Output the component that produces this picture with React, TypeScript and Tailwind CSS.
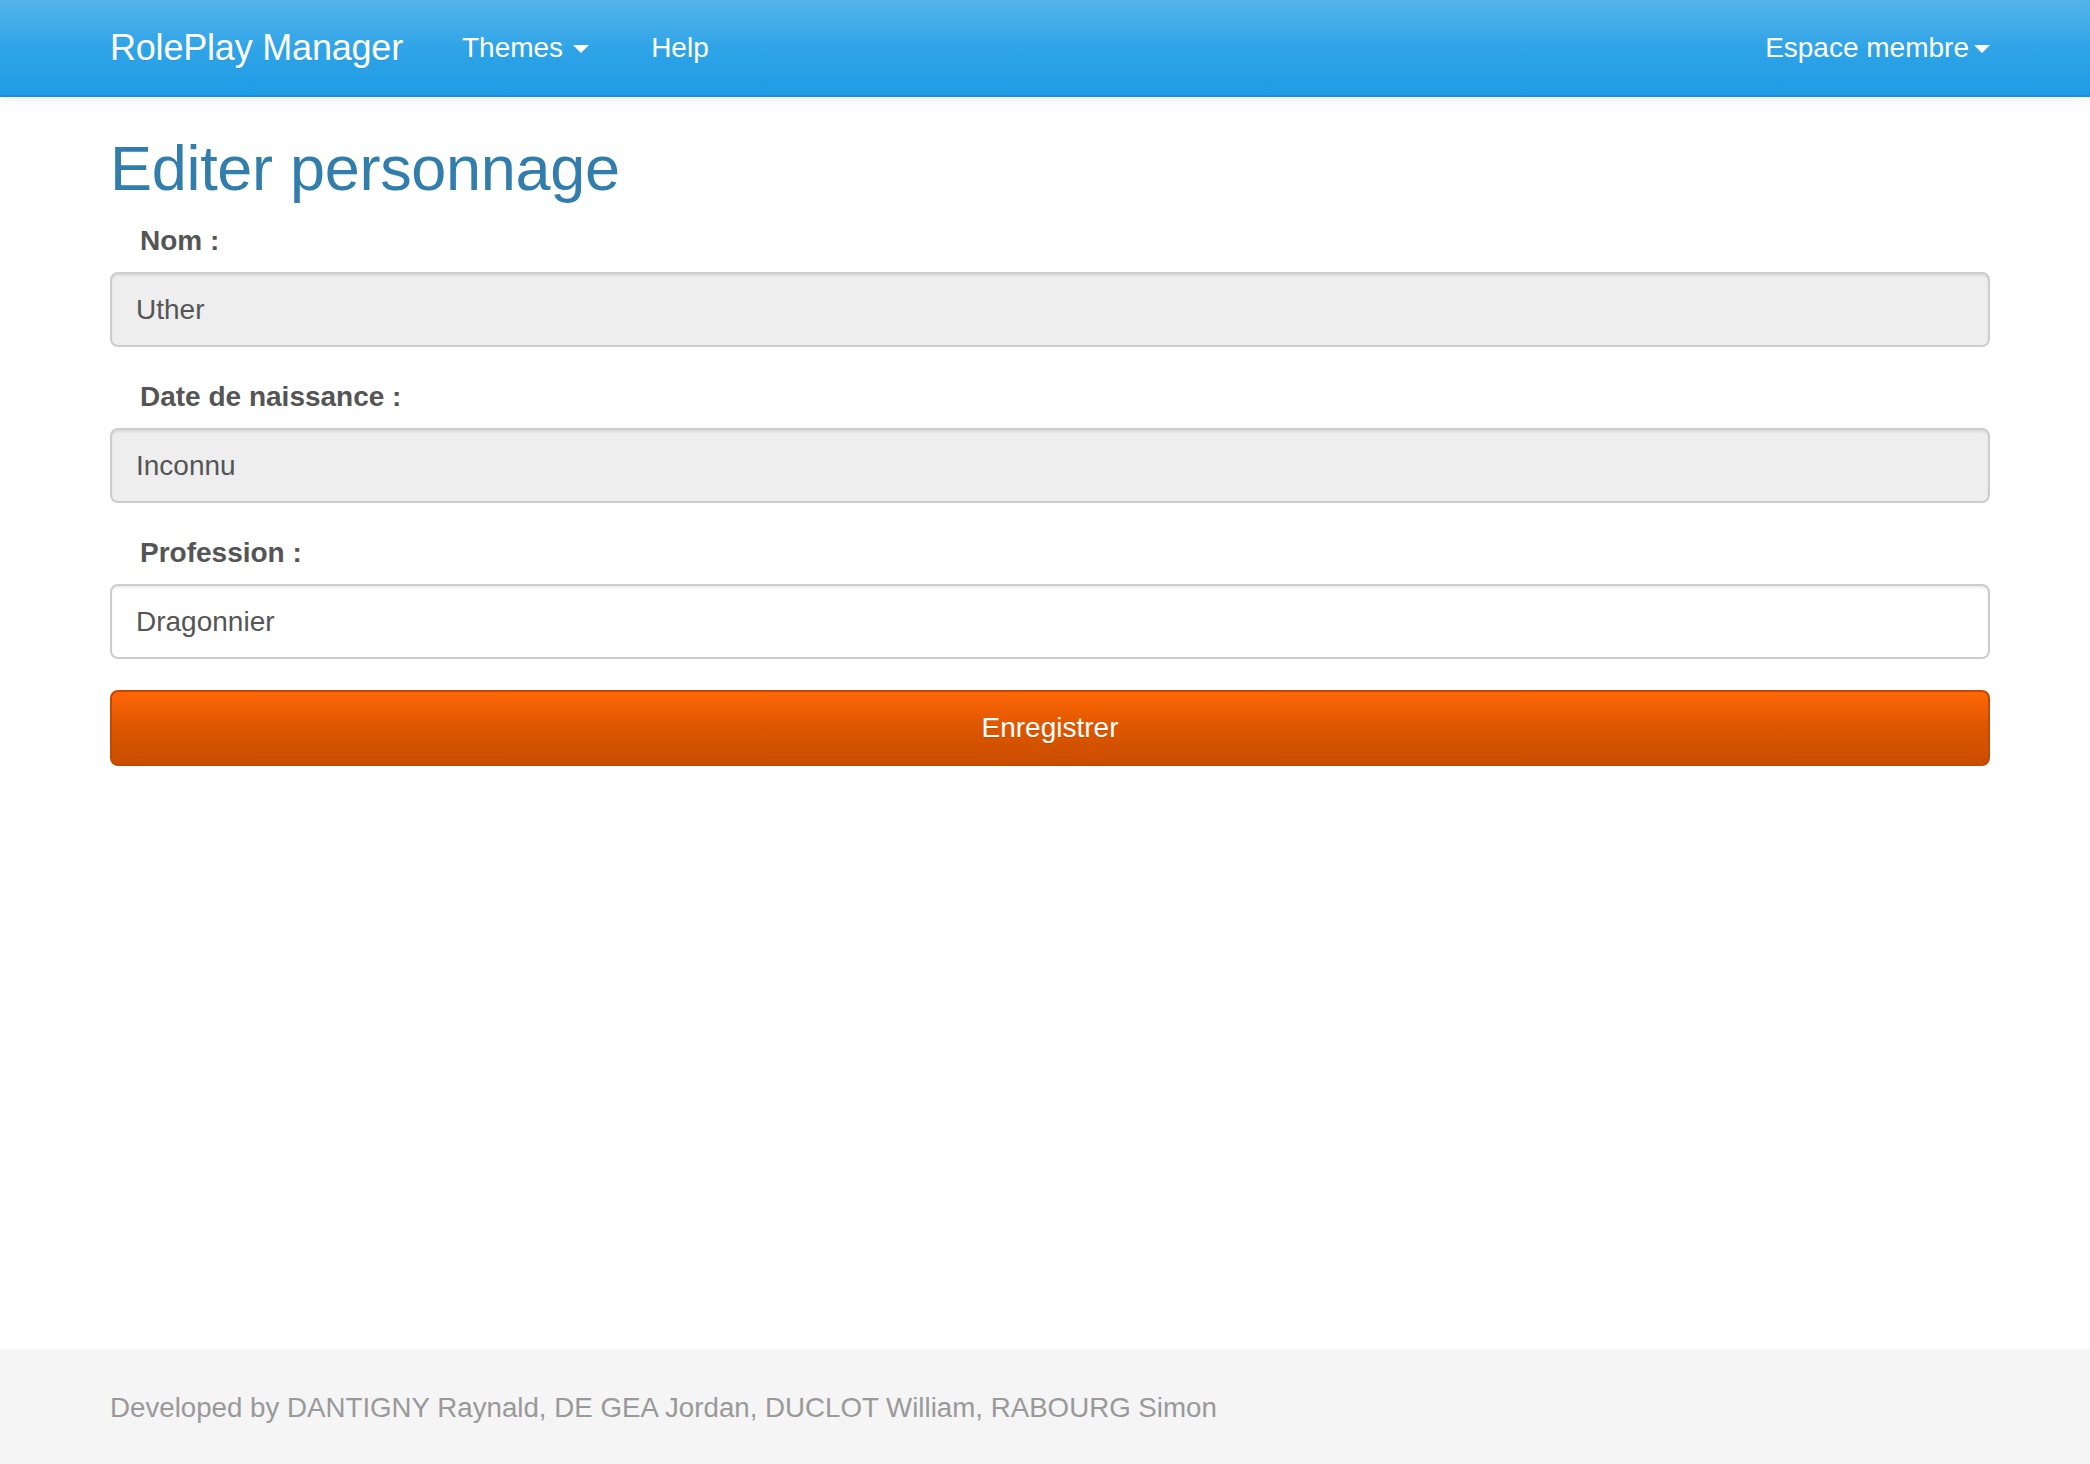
type Field = {
  id: string
  label: string
  value: string
  readOnly?: boolean
}

const FIELDS: Field[] = [
  { id: 'nom', label: 'Nom :', value: 'Uther', readOnly: true },
  { id: 'naissance', label: 'Date de naissance :', value: 'Inconnu', readOnly: true },
  { id: 'profession', label: 'Profession :', value: 'Dragonnier' },
]

function Caret({ gap }: { gap: string }) {
  return (
    <svg width="16" height="8" viewBox="0 0 16 8" className={gap}>
      <polygon points="0,0 16,0 8,8" fill="#ffffff" />
    </svg>
  )
}

function NavBar() {
  return (
    <header className="h-[97px] shrink-0 bg-gradient-to-b from-[#54b4eb] via-[#2fa4e7] to-[#1d9ce5] border-b-2 border-[#1990d5] shadow-[0_3px_10px_rgba(0,0,0,0.07)] relative z-10">
      <div className="h-full flex items-center pl-[110px] pr-[100px] text-white [text-shadow:0_1px_0_rgba(0,0,0,0.08)]">
        <a className="text-[36px] leading-none tracking-[-0.2px] mr-[59px]">RolePlay Manager</a>
        <nav className="flex items-center text-[28px] leading-none">
          <button type="button" className="flex items-center">
            Themes
            <Caret gap="ml-[10px] mt-[2px]" />
          </button>
          <button type="button" className="ml-[62px]">Help</button>
        </nav>
        <button type="button" className="ml-auto flex items-center text-[28px] leading-none">
          Espace membre
          <Caret gap="ml-[5px] mt-[2px]" />
        </button>
      </div>
    </header>
  )
}

function FormRow({ field }: { field: Field }) {
  return (
    <div className="flex flex-col">
      <label htmlFor={field.id} className="pl-[30px] text-[28px] leading-[40px] font-bold text-[#555555]">
        {field.label}
      </label>
      <input
        id={field.id}
        defaultValue={field.value}
        readOnly={field.readOnly}
        className={
          field.readOnly
            ? 'mt-[11px] h-[75px] w-full rounded-[8px] border-2 border-[#cccccc] bg-[#eeeeee] px-[24px] text-[28px] text-[#555555] shadow-[inset_0_2px_2px_rgba(0,0,0,0.075)] outline-none'
            : 'mt-[11px] h-[75px] w-full rounded-[8px] border-2 border-[#cccccc] bg-white px-[24px] text-[28px] text-[#555555] shadow-[inset_0_2px_2px_rgba(0,0,0,0.075)] outline-none'
        }
      />
    </div>
  )
}

export default function App() {
  return (
    <div className="min-h-screen flex flex-col bg-white font-['Liberation_Sans',Arial,sans-serif]">
      <NavBar />
      <main className="flex-1 pl-[110px] pr-[100px]">
        <h1 className="mt-[37px] text-[63px] leading-[68px] text-[#317eac] tracking-[-0.3px]">Editer personnage</h1>
        <form className="mt-[19px] flex flex-col gap-[30px]">
          {FIELDS.map((f) => (
            <FormRow key={f.id} field={f} />
          ))}
          <button
            type="button"
            className="mt-[1px] h-[76px] w-full rounded-[8px] border-2 border-[#c24a00] bg-gradient-to-b from-[#ff6707] via-[#dd5600] to-[#c94e00] text-[28px] text-white [text-shadow:0_1px_0_rgba(0,0,0,0.1)]"
          >
            Enregistrer
          </button>
        </form>
      </main>
      <footer className="h-[115px] shrink-0 bg-[#f5f5f5] flex items-center pl-[110px]">
        <p className="text-[27.7px] text-[#999999] mt-[3px]">
          Developed by DANTIGNY Raynald, DE GEA Jordan, DUCLOT William, RABOURG Simon
        </p>
      </footer>
    </div>
  )
}
